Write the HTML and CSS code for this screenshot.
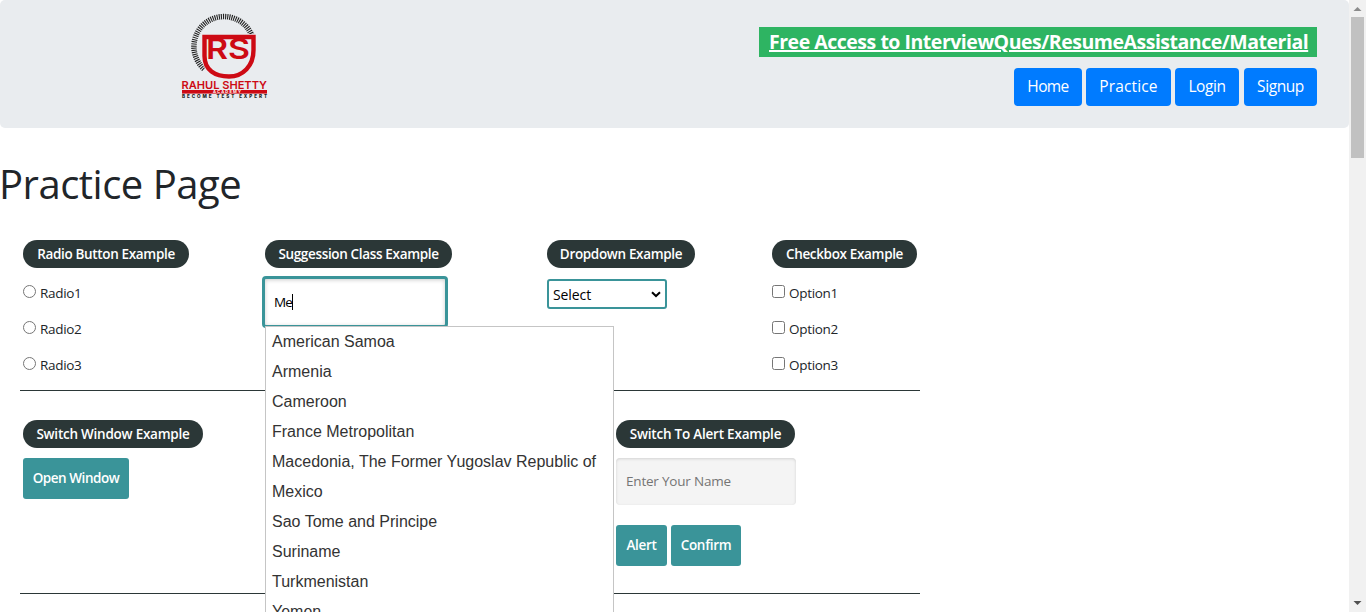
FILE: index.html
```html
<!DOCTYPE html>
<html lang="en">
<head>
<meta charset="utf-8">
<title>Practice Page</title>
<link rel="stylesheet" href="styles.css">
</head>
<body>
<div class="window">
  <div class="page">
    <header class="header">
      <svg class="logo" width="88" height="88" viewBox="0 0 88 88" role="img" aria-label="Rahul Shetty Academy">
        <path d="M22 56A30 30 0 1 1 70 23" fill="none" stroke="#222" stroke-width="5.5" stroke-dasharray="1.1 1"/>
        <path d="M22.500 24H71.500V37C71.500 53 61 63.500 47 63.500C33 63.500 22.500 57 22.500 43Z" fill="none" stroke="#e9ecef" stroke-width="6"/>
        <path d="M40 24H71.500V37C71.500 53 61 63.500 47 63.500C33 63.500 22.500 57 22.500 43V24H42" fill="none" stroke="#cd0a14" stroke-width="4.400"/>
        <text class="logo-initials" x="24" y="46" textLength="44" lengthAdjust="spacingAndGlyphs">RS</text>
        <text class="logo-name" x="-0.5" y="75.700" textLength="85.500" lengthAdjust="spacingAndGlyphs">RAHUL SHETTY</text>
        <rect x="0" y="77" width="85" height="3.600" fill="#cd0a14"/>
        <text class="logo-academy" x="31" y="80.200" textLength="28">ACADEMY</text>
        <text class="logo-tag" x="0" y="85.200" textLength="85">BECOME TEST EXPERT</text>
      </svg>
      <div class="header-side">
        <a class="banner"><span>Free Access to InterviewQues/ResumeAssistance/Material</span></a>
        <nav class="nav">
          <a class="btn w-home">Home</a><a class="btn w-practice">Practice</a><a class="btn w-login">Login</a><a class="btn w-signup">Signup</a>
        </nav>
      </div>
    </header>
    <h1 class="title">Practice Page</h1>
    <section class="row row-first">
      <div class="col col-radio">
        <h2 class="pill p-radio">Radio Button Example</h2>
        <label class="choice"><input type="radio"><span>Radio1</span></label>
        <label class="choice"><input type="radio"><span>Radio2</span></label>
        <label class="choice"><input type="radio"><span>Radio3</span></label>
      </div>
      <div class="col col-suggest">
        <h2 class="pill p-suggest">Suggession Class Example</h2>
        <div class="field field-active"><span>Me</span><i class="caret"></i></div>
        <ul class="menu">
          <li>American Samoa</li><li>Armenia</li><li>Cameroon</li><li>France Metropolitan</li>
          <li>Macedonia, The Former Yugoslav Republic of</li><li>Mexico</li><li>Sao Tome and Principe</li>
          <li>Suriname</li><li>Turkmenistan</li><li>Yemen</li>
        </ul>
      </div>
      <div class="col col-dropdown">
        <h2 class="pill p-dropdown">Dropdown Example</h2>
        <div class="select"><span>Select</span>
          <svg width="10" height="7" viewBox="0 0 10 7"><path d="M1 1.200L5 5L9 1.200" fill="none" stroke="#000" stroke-width="2"/></svg>
        </div>
      </div>
      <div class="col">
        <h2 class="pill p-checkbox">Checkbox Example</h2>
        <label class="choice"><input type="checkbox"><span>Option1</span></label>
        <label class="choice"><input type="checkbox"><span>Option2</span></label>
        <label class="choice"><input type="checkbox"><span>Option3</span></label>
      </div>
    </section>
    <section class="row row-second">
      <div class="col col-window">
        <h2 class="pill p-window">Switch Window Example</h2>
        <button class="action a-open">Open Window</button>
      </div>
      <div class="col">
        <h2 class="pill p-alert">Switch To Alert Example</h2>
        <div class="field field-name"><span>Enter Your Name</span></div>
        <div class="actions"><button class="action a-alert">Alert</button><button class="action a-confirm">Confirm</button></div>
      </div>
    </section>
  </div>
  <div class="scrollbar">
    <svg width="17" height="17"><path d="M4.500 11H12.500L8.500 7Z" fill="#8b8b8b"/></svg>
    <div class="thumb"></div>
    <svg class="down" width="17" height="17"><path d="M4.500 6H12.500L8.500 10Z" fill="#505050"/></svg>
  </div>
</div>
</body>
</html>
```
FILE: styles.css
```css
* { box-sizing: border-box; }
body { margin: 0; background: #fff; color: #212529; font: 14px/21px "Open Sans", sans-serif; }
.window { display: flex; width: 1366px; height: 612px; overflow: hidden; }
.page { width: 1349px; height: 612px; overflow: hidden; }
.header { display: flex; justify-content: space-between; height: 128px; padding: 13px 32px 0 182px; background: #e9ecef; border-radius: 5px; }
.logo { display: block; overflow: visible; }
.logo text { font-family: Inter, sans-serif; }
.logo .logo-initials { font-size: 29px; font-weight: 600; fill: #cd0a14; }
.logo .logo-name { font-size: 11px; font-weight: 600; fill: #cd0a14; }
.logo .logo-academy { font-size: 4px; font-weight: 700; fill: #fff; }
.logo .logo-tag { font-size: 4.6px; font-weight: 800; fill: #222; }
.header-side { display: flex; flex-direction: column; align-items: flex-end; gap: 11px; padding-top: 14px; }
.banner { display: flex; padding-left: 10px; width: 558px; height: 30px; background: #2eb462; color: #fff; font-size: 19.5px; font-weight: 700; letter-spacing: -0.48px; line-height: 30px; text-decoration: underline; text-decoration-thickness: 2px; white-space: nowrap; }
.nav { display: flex; gap: 4px; }
.btn { height: 38px; border-radius: 4px; background: #007bff; color: #fff; font-size: 15.5px; font-weight: 500; line-height: 37px; text-align: center; letter-spacing: -0.4px; }
.w-home { width: 68px; letter-spacing: -0.6px; }
.w-practice { width: 85px; letter-spacing: 0.15px; }
.w-login { width: 64px; margin-right: 1px; }
.w-signup { width: 73px; }
.title { height: 48px; margin: 32px 0; font-size: 40px; font-weight: 400; line-height: 48px; letter-spacing: -0.5px; text-indent: -1px; white-space: nowrap; }
.row { display: flex; width: 900px; margin-left: 20px; padding-left: 3px; border-bottom: 1px solid #2b3737; }
.row-first { height: 151px; }
.row-second { height: 203px; padding-top: 29px; }
.col { position: relative; }
.col-radio { width: 242px; }
.col-suggest { width: 282px; }
.col-dropdown { width: 225px; }
.col-window { width: 593px; }
.pill { height: 28px; margin: 0; border-radius: 14px; background: #2b3737; color: #fff; font-size: 13.5px; font-weight: 600; line-height: 28px; letter-spacing: -0.34px; text-align: center; white-space: nowrap; }
.p-radio { width: 166px; }
.p-suggest { width: 187px; }
.p-dropdown { width: 148px; }
.p-checkbox { width: 145px; }
.p-window { width: 180px; letter-spacing: -0.24px; }
.p-alert { width: 179px; letter-spacing: -0.22px; }
.choice { display: flex; height: 21px; margin-bottom: 15px; line-height: 21px; font-size: 13.5px; letter-spacing: -0.3px; }
.pill + .choice { margin-top: 15px; }
.choice input { width: 13px; height: 13px; margin: 2px 4px 0 0; }
.field { display: flex; align-items: center; border-radius: 4px; box-shadow: inset 0 1px 4px rgba(0,0,0,.2); }
.field-active { width: 186px; height: 52px; margin: 8px 0 0 -3px; padding-left: 9px; border: 3px solid #3a9499; color: #000; font-size: 13.5px; letter-spacing: -0.8px; }
.caret { width: 1px; height: 16px; background: #000; }
.menu { position: absolute; top: 86px; left: 0; z-index: 2; width: 349px; height: 310px; margin: 0; padding: 0 6px; border: 1px solid #c5c5c5; background: #fff; color: #333; font: 16px/30px "Liberation Sans", Arial, sans-serif; list-style: none; white-space: nowrap; }
.select { display: flex; align-items: center; justify-content: space-between; width: 120px; height: 30px; margin-top: 11px; padding: 0 4px; border: 2px solid #3a9499; border-radius: 3px; color: #000; letter-spacing: -0.1px; }
.action { display: block; height: 41px; padding: 0; border: 0; border-radius: 3px; background: #3a9499; color: #fff; font: 600 13.5px/41px "Open Sans", sans-serif; letter-spacing: -0.3px; white-space: nowrap; }
.a-open { width: 106px; margin-top: 10px; letter-spacing: -0.45px; }
.a-alert { width: 51px; }
.a-confirm { width: 70px; }
.field-name { width: 180px; height: 47px; margin-top: 10px; padding-left: 10px; background: #f4f4f4; color: #757575; font-size: 13.5px; font-weight: 500; letter-spacing: -0.2px; box-shadow: inset 0 1px 3px rgba(0,0,0,.14); }
.actions { display: flex; gap: 4px; margin-top: 20px; }
.scrollbar { display: flex; flex-direction: column; width: 17px; height: 612px; background: #f1f1f1; }
.thumb { width: 13px; height: 141px; margin-left: 2px; background: #c1c1c1; }
.down { margin-top: auto; }
```
